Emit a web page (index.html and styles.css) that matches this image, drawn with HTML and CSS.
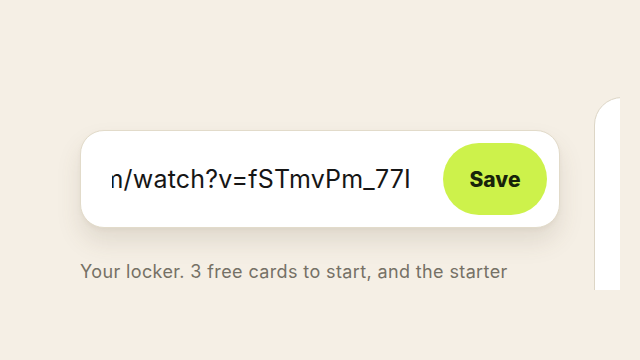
FILE: index.html
```html
<!DOCTYPE html>
<html lang="en">
<head>
<meta charset="utf-8">
<title>Locker</title>
<link rel="stylesheet" href="styles.css">
</head>
<body>
<div class="viewport">
  <div class="track">
    <section class="panel">
      <form class="url-card" onsubmit="return false">
        <div class="url-field"><span class="url-text">https://www.youtube.com/watch?v=fSTmvPm_77I</span></div>
        <button class="save-btn" type="submit">Save</button>
      </form>
      <p class="caption">Your locker. 3 free cards to start, and the starter</p>
    </section>
    <section class="next-card"></section>
  </div>
</div>
</body>
</html>
```
FILE: styles.css
```css
* { box-sizing: border-box; }
html, body { margin: 0; padding: 0; }
body {
  background: #f5efe5;
  width: 640px;
  height: 360px;
  overflow: hidden;
  font-family: Inter, "Noto Sans", sans-serif;
}
.viewport {
  width: 620px;
  height: 290px;
  overflow: hidden;
  padding-left: 80px;
}
.track {
  display: flex;
  align-items: flex-start;
  gap: 34px;
}
.panel {
  flex: 0 0 480px;
  padding-top: 130px;
}
.url-card {
  display: flex;
  align-items: center;
  gap: 32px;
  width: 480px;
  height: 98px;
  padding: 12px 12px 12px 31px;
  background: #ffffff;
  border: 1.5px solid #e2dbca;
  border-radius: 24px;
  box-shadow: 0 14px 24px rgba(90, 80, 55, 0.13), 0 2px 4px rgba(90, 80, 55, 0.05);
}
.url-field {
  flex: 1;
  min-width: 0;
  display: flex;
  justify-content: flex-end;
  overflow: hidden;
}
.url-text {
  white-space: nowrap;
  font-size: 25px;
  color: #161616;
  letter-spacing: 0.2px;
}
.save-btn {
  flex: 0 0 104px;
  height: 72px;
  border: none;
  border-radius: 36px;
  background: #cdf24b;
  color: #17230a;
  font-family: Inter, "Noto Sans", sans-serif;
  font-weight: 800;
  font-size: 21px;
  padding: 0;
}
.caption {
  margin: 33px 0 0;
  font-size: 18px;
  color: #757166;
  white-space: nowrap;
  letter-spacing: 0.38px;
}
.next-card {
  flex: 0 0 300px;
  height: 260px;
  margin-top: 97px;
  background: #ffffff;
  border: 1.5px solid #ddd6c6;
  border-radius: 28px;
}
```
